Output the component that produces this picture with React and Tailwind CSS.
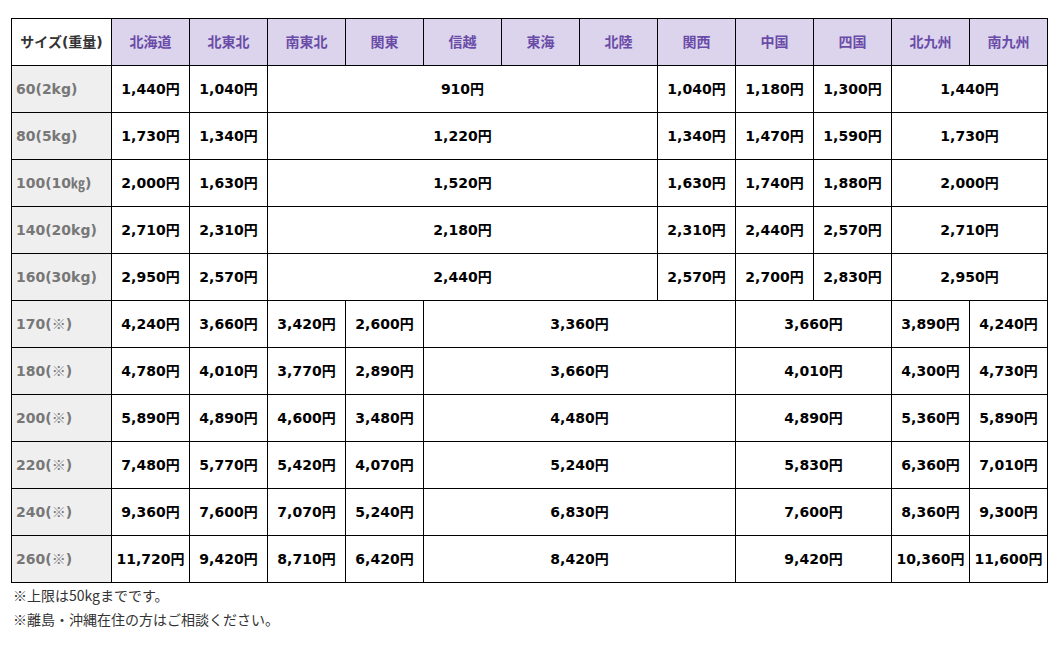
const regions = ["北海道", "北東北", "南東北", "関東", "信越", "東海", "北陸", "関西", "中国", "四国", "北九州", "南九州"];

// each row: [label, [[text, colSpan], ...]]
const rows = [
  ["60(2kg)", [["1,440円", 1], ["1,040円", 1], ["910円", 5], ["1,040円", 1], ["1,180円", 1], ["1,300円", 1], ["1,440円", 2]]],
  ["80(5kg)", [["1,730円", 1], ["1,340円", 1], ["1,220円", 5], ["1,340円", 1], ["1,470円", 1], ["1,590円", 1], ["1,730円", 2]]],
  ["100(10㎏)", [["2,000円", 1], ["1,630円", 1], ["1,520円", 5], ["1,630円", 1], ["1,740円", 1], ["1,880円", 1], ["2,000円", 2]]],
  ["140(20kg)", [["2,710円", 1], ["2,310円", 1], ["2,180円", 5], ["2,310円", 1], ["2,440円", 1], ["2,570円", 1], ["2,710円", 2]]],
  ["160(30kg)", [["2,950円", 1], ["2,570円", 1], ["2,440円", 5], ["2,570円", 1], ["2,700円", 1], ["2,830円", 1], ["2,950円", 2]]],
  ["170(※)", [["4,240円", 1], ["3,660円", 1], ["3,420円", 1], ["2,600円", 1], ["3,360円", 4], ["3,660円", 2], ["3,890円", 1], ["4,240円", 1]]],
  ["180(※)", [["4,780円", 1], ["4,010円", 1], ["3,770円", 1], ["2,890円", 1], ["3,660円", 4], ["4,010円", 2], ["4,300円", 1], ["4,730円", 1]]],
  ["200(※)", [["5,890円", 1], ["4,890円", 1], ["4,600円", 1], ["3,480円", 1], ["4,480円", 4], ["4,890円", 2], ["5,360円", 1], ["5,890円", 1]]],
  ["220(※)", [["7,480円", 1], ["5,770円", 1], ["5,420円", 1], ["4,070円", 1], ["5,240円", 4], ["5,830円", 2], ["6,360円", 1], ["7,010円", 1]]],
  ["240(※)", [["9,360円", 1], ["7,600円", 1], ["7,070円", 1], ["5,240円", 1], ["6,830円", 4], ["7,600円", 2], ["8,360円", 1], ["9,300円", 1]]],
  ["260(※)", [["11,720円", 1], ["9,420円", 1], ["8,710円", 1], ["6,420円", 1], ["8,420円", 4], ["9,420円", 2], ["10,360円", 1], ["11,600円", 1]]],
];

const font = { fontFamily: '"DejaVu Sans", "Noto Sans CJK JP", sans-serif' };
const cjk = { fontFamily: '"Noto Sans CJK JP", sans-serif' };

// render ※ with the CJK face so it looks like the original
function Label({ text }) {
  const parts = text.split("※");
  if (parts.length === 1) return text;
  return (
    <>
      {parts[0]}
      <span style={cjk}>※</span>
      {parts[1]}
    </>
  );
}

export default function App() {
  return (
    <div className="min-h-screen bg-white pt-[18px] pl-[11px]" style={font}>
      <table className="border-collapse table-fixed w-[1036px]">
        <colgroup>
          <col className="w-[100px]" />
          {regions.map((r) => (
            <col key={r} className="w-[78px]" />
          ))}
        </colgroup>
        <thead>
          <tr className="h-[47px]">
            <th className="border border-black bg-white text-[14px] font-bold text-[#333] text-center p-0">
              サイズ(重量)
            </th>
            {regions.map((r) => (
              <th
                key={r}
                className="border border-black bg-[#dcd4ec] text-[14px] font-bold text-[#6a4ca8] text-center p-0"
              >
                {r}
              </th>
            ))}
          </tr>
        </thead>
        <tbody>
          {rows.map(([label, cells]) => (
            <tr key={label} className="h-[47px]">
              <td className="border border-black bg-[#efefef] text-[14px] font-bold text-[#777] text-left pl-[4px] whitespace-nowrap">
                <Label text={label} />
              </td>
              {cells.map(([text, span], i) => (
                <td
                  key={i}
                  colSpan={span}
                  className="border border-black text-[14px] font-bold text-black text-center p-0 whitespace-nowrap"
                >
                  {text}
                </td>
              ))}
            </tr>
          ))}
        </tbody>
      </table>
      <div className="text-[14px] text-[#333] leading-[24px] pl-[2px]" style={cjk}>
        <p>※上限は50kgまでです。</p>
        <p>※離島・沖縄在住の方はご相談ください。</p>
      </div>
    </div>
  );
}
